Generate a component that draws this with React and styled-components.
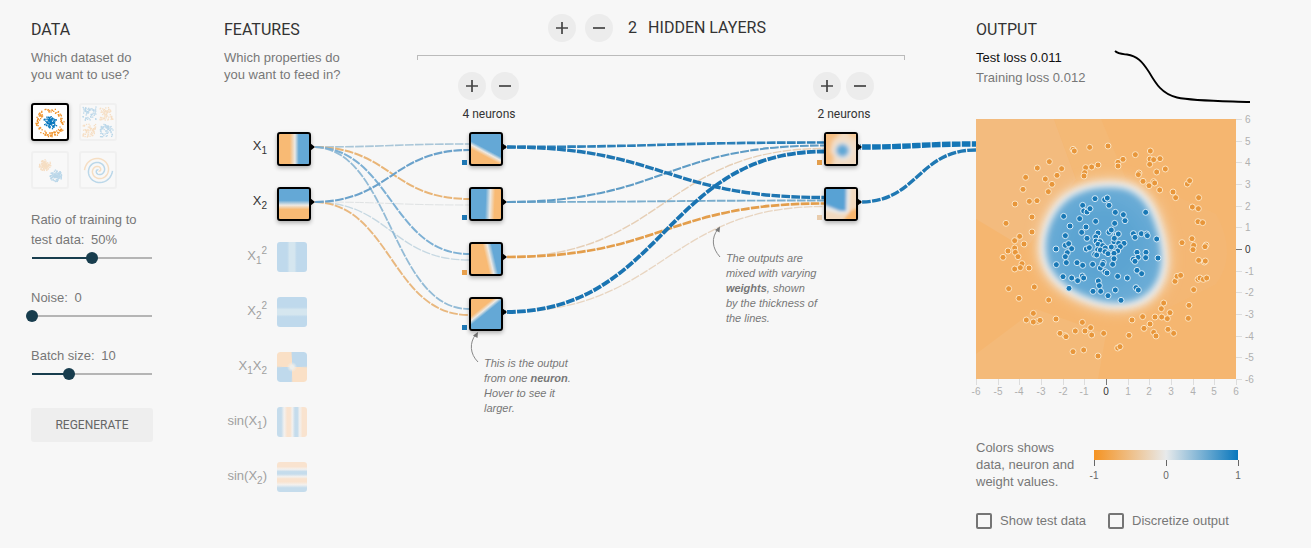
import React, { useLayoutEffect, useRef, useState } from "react";
import styled, { createGlobalStyle, css } from "styled-components";

const ORANGE = "#f8ba74";
const BLUE = "#64a8d6";
const MID = "#ece9e4";
const SANS = '"Liberation Sans", Arial, sans-serif';
const ROBOTO = 'Roboto, "Liberation Sans", sans-serif';

const GlobalStyle = createGlobalStyle`
  * { box-sizing: border-box; }
  body {
    margin: 0;
    background: #f7f7f7;
    color: #777;
    font-family: ${SANS};
    font-size: 13px;
  }
`;

const Page = styled.main`
  display: grid;
  grid-template-columns: 122px minmax(640px, 1fr) 304px;
  padding: 20px 31px 19px;
`;

const Heading = styled.h2`
  margin: 0;
  font: 400 16px/20px ${ROBOTO};
  color: #333;
  text-transform: uppercase;
  white-space: nowrap;
`;

const Intro = styled.p`
  margin: 9px 0 0;
  line-height: 17px;
  white-space: nowrap;
`;

/* ---------- data column ---------- */

const DataColumn = styled.section`
  display: flex;
  flex-direction: column;
`;

const DatasetGrid = styled.div`
  display: grid;
  grid-template-columns: 38px 38px;
  gap: 10px;
  margin: 20px 0 21px;
`;

const DatasetButton = styled.button`
  width: 38px;
  height: 38px;
  padding: 0;
  border: 2px solid ${(p) => (p.$selected ? "#000" : "#f0f0f0")};
  border-radius: 3px;
  background: ${(p) => (p.$selected ? "#fff" : "#f8f8f8")};
  box-shadow: ${(p) => (p.$selected ? "0 1px 4px rgba(0, 0, 0, 0.25)" : "none")};

  svg {
    display: block;
    opacity: ${(p) => (p.$selected ? 1 : 0.25)};
  }
`;

const SliderField = styled.label`
  display: flex;
  flex-direction: column;
  gap: 2px;
  margin-bottom: 24px;
  line-height: 20px;
`;

const SliderValue = styled.span`
  margin-left: 3px;
`;

const thumb = css`
  width: 12px;
  height: 12px;
  border: 0;
  border-radius: 50%;
  background: #183d4e;
`;

const Slider = styled.input`
  appearance: none;
  width: 132px;
  height: 12px;
  margin: 0 0 0 -5px;
  background: linear-gradient(
      to right,
      #183d4e ${(p) => p.$fill}%,
      #b5b5b5 ${(p) => p.$fill}%
    )
    6px 5px / 120px 2px no-repeat;

  &::-webkit-slider-thumb {
    appearance: none;
    ${thumb}
  }
  &::-moz-range-thumb {
    ${thumb}
  }
`;

const RegenerateButton = styled.button`
  height: 34px;
  margin-top: 4px;
  border: 0;
  border-radius: 3px;
  background: #eee;
  color: #666;
  font: 400 12px ${ROBOTO};
  text-transform: uppercase;
`;

/* ---------- network ---------- */

const NetworkSection = styled.section`
  position: relative;
  display: flex;
  margin-left: 71px;
`;

const LinkLayer = styled.svg`
  position: absolute;
  left: 0;
  top: -20px;
  width: 100%;
  height: 500px;
  pointer-events: none;
`;

const FeatureColumn = styled.div`
  width: 193px;
  position: relative;
`;

const FeatureList = styled.div`
  display: flex;
  flex-direction: column;
  gap: 21px;
  width: 87px;
  margin-top: 49px;
`;

const FeatureRow = styled.div`
  display: grid;
  grid-template-columns: 1fr 34px;
  column-gap: 10px;
  height: 34px;
`;

const FeatureLabel = styled.span`
  justify-self: end;
  line-height: 28px;
  white-space: nowrap;
  color: ${(p) => (p.$active ? "#333" : "#a0a0a0")};

  sub,
  sup {
    font-size: 10px;
    line-height: 0;
    vertical-align: baseline;
    position: relative;
  }
  sub { top: 4px; }
  sup { top: -6px; }
`;

const Node = styled.button`
  position: relative;
  width: ${(p) => (p.$active ? 34 : 30)}px;
  height: ${(p) => (p.$active ? 34 : 30)}px;
  padding: 0;
  border: ${(p) => (p.$active ? "2px solid #000" : "0")};
  border-radius: 3px;
  background: ${(p) => p.$map} padding-box;
  box-shadow: ${(p) => (p.$active ? "0 2px 4px rgba(0, 0, 0, 0.3)" : "none")};

  &::after {
    content: "";
    display: ${(p) => (p.$active ? "block" : "none")};
    position: absolute;
    left: 31px;
    top: 9px;
    border: solid transparent;
    border-width: 4px 0 4px 5px;
    border-left-color: #000;
  }

  svg { display: block; }
`;

const Bias = styled.i`
  position: absolute;
  left: -9px;
  top: 26px;
  width: 5px;
  height: 5px;
  background: ${(p) => p.$color};
`;

const HiddenColumn = styled.div`
  position: relative;
  flex: 1;
  margin: -6px 71px 0 0;
`;

const HiddenHeader = styled.div`
  display: flex;
  justify-content: center;
  align-items: center;
  gap: 9px;
  padding-right: 8px;
`;

const LayerCount = styled.span`
  margin: 0 2px 0 6px;
`;

const Bracket = styled.div`
  height: 5px;
  margin-top: 13px;
  border: 1px solid #bbb;
  border-bottom: 0;
`;

const RoundButton = styled.button`
  display: grid;
  place-items: center;
  width: 28px;
  height: 28px;
  padding: 0;
  border: 0;
  border-radius: 50%;
  background: #ececec;
`;

const Layers = styled.div`
  display: flex;
  justify-content: space-between;
  margin-top: 12px;
  padding: 0 30px 0 41px;
`;

const Layer = styled.div`
  width: 62px;
`;

const LayerControls = styled.div`
  display: flex;
  gap: 5px;
`;

const NeuronCount = styled.div`
  margin: 4px 0 8px;
  font: 400 12px/20px ${ROBOTO};
  color: #333;
  text-align: center;
  white-space: nowrap;
`;

const NeuronList = styled.div`
  display: flex;
  flex-direction: column;
  gap: 21px;
  margin-left: 11px;
`;

const Callout = styled.p`
  position: absolute;
  margin: 0;
  font-size: 11px;
  font-style: italic;
  line-height: 15px;
  white-space: nowrap;
  color: #777;
  ${(p) => (p.$weights ? "top: 231px; right: 159px;" : "top: 336px; left: 260px;")}
`;

/* ---------- output ---------- */

const OutputColumn = styled.section`
  display: flex;
  flex-direction: column;
`;

const LossRow = styled.div`
  display: grid;
  grid-template-columns: 139px 136px;
  height: 71px;
  margin-top: 8px;
  line-height: 20px;
`;

const Loss = styled.div`
  color: ${(p) => (p.$test ? "#111" : "#777")};
`;

const Chart = styled.svg`
  display: block;
  overflow: visible;
`;

const Legend = styled.div`
  display: grid;
  grid-template-columns: 118px 145px;
  height: 51px;
  margin-top: 35px;
  line-height: 17px;
`;

const LegendText = styled.p`
  margin: 0;
  white-space: nowrap;
`;

const Options = styled.div`
  display: flex;
  gap: 22px;
  margin-top: 23px;
`;

const Option = styled.label`
  display: flex;
  align-items: center;
  gap: 8px;
  line-height: 16px;
`;

const Checkbox = styled.input`
  appearance: none;
  width: 16px;
  height: 16px;
  margin: 0;
  border: 2px solid #757575;
  border-radius: 2px;

  &:checked { background: #757575; }
`;

/* ---------- drawings ---------- */

function Sign({ plus }) {
  return (
    <svg width="14" height="14" viewBox="0 0 14 14" stroke="#444" strokeWidth="1.7" aria-hidden="true">
      <path d={plus ? "M1 7H13M7 1V13" : "M1 7H13"} />
    </svg>
  );
}

function makeRandom(seed) {
  let s = seed;
  return () => {
    s = (s * 16807) % 2147483647;
    return s / 2147483647;
  };
}

function disc(rand, n, cx, cy, r0, r1) {
  return Array.from({ length: n }, () => {
    const a = rand() * Math.PI * 2;
    const r = r0 + rand() * (r1 - r0);
    return [cx + Math.cos(a) * r, cy + Math.sin(a) * r];
  });
}

function square(rand, n, x, y) {
  return Array.from({ length: n }, () => [x + rand() * 13, y + rand() * 13]);
}

function Specks({ points, color }) {
  return points.map(([x, y], i) => (
    <rect key={i} x={x - 0.6} y={y - 0.6} width="1.3" height="1.3" fill={color} />
  ));
}

function spiral(phase) {
  let d = "";
  for (let i = 0; i <= 60; i++) {
    const r = 0.5 + (i / 60) * 13.5;
    const a = phase + (i / 60) * 10.5;
    d += `${i ? "L" : "M"}${(17.5 + Math.cos(a) * r).toFixed(1)} ${(17.5 - Math.sin(a) * r).toFixed(1)}`;
  }
  return d;
}

const DATA_BLUE = "#0877bd";
const DATA_ORANGE = "#f0932b";

function DatasetPicture({ kind }) {
  const rand = makeRandom(kind.length * 7919);
  return (
    <svg width="34" height="34" viewBox="0 0 34 34" aria-hidden="true">
      {kind === "circle" && (
        <>
          <Specks points={disc(rand, 115, 17.5, 17.5, 10, 14.5)} color={DATA_ORANGE} />
          <Specks points={disc(rand, 95, 17.5, 17.5, 0, 7)} color={DATA_BLUE} />
        </>
      )}
      {kind === "exclusive or" && (
        <>
          <Specks points={square(rand, 65, 2, 2)} color={DATA_BLUE} />
          <Specks points={square(rand, 65, 19, 19)} color={DATA_BLUE} />
          <Specks points={square(rand, 65, 19, 2)} color={DATA_ORANGE} />
          <Specks points={square(rand, 65, 2, 19)} color={DATA_ORANGE} />
        </>
      )}
      {kind === "gaussian" && (
        <>
          <Specks points={disc(rand, 130, 12, 12, 0, 6)} color={DATA_ORANGE} />
          <Specks points={disc(rand, 130, 23, 23, 0, 6)} color={DATA_BLUE} />
        </>
      )}
      {kind === "spiral" && (
        <g fill="none" strokeWidth="1.5">
          <path d={spiral(-1.1)} stroke={DATA_ORANGE} />
          <path d={spiral(2.04)} stroke={DATA_BLUE} />
        </g>
      )}
    </svg>
  );
}

function BlobMap() {
  return (
    <svg width="30" height="30" viewBox="0 0 30 30" aria-hidden="true">
      <defs>
        <filter id="soft" x="-50%" y="-50%" width="200%" height="200%">
          <feGaussianBlur stdDeviation="2" />
        </filter>
      </defs>
      <rect width="30" height="30" fill="#f2dcc4" />
      <g filter="url(#soft)">
        <path d="M-4 -4H18L6 7L4 18L8 22L5 34H-4Z" fill="#f6bd80" />
        <path d="M20 -4H34V6L24 3Z" fill="#f6c894" />
        <circle cx="17" cy="17" r="9" fill="#ecebea" />
        <circle cx="16.500" cy="16.500" r="6.500" fill="#62a8d6" />
      </g>
    </svg>
  );
}

function CornerMap() {
  return (
    <svg width="30" height="30" viewBox="0 0 30 30" aria-hidden="true">
      <defs>
        <filter id="softer" x="-50%" y="-50%" width="200%" height="200%">
          <feGaussianBlur stdDeviation="1.6" />
        </filter>
      </defs>
      <rect width="30" height="30" fill="#f1d9bf" />
      <g filter="url(#softer)">
        <path d="M34 18L24 22L16 34H34Z" fill="#f8b66e" />
        <path d="M-6 -6H25L23 24L14 25L-6 20Z" fill="#e9e9e8" />
        <path d="M-6 -6H20.500L20 22L14 22L-6 14Z" fill="#58a2d4" />
      </g>
    </svg>
  );
}

const ramp = (angle, a, b, c, from, to) =>
  `linear-gradient(${angle}deg, ${from} ${a}%, ${MID} ${b}%, ${to} ${c}%)`;

const PALE_BLUE = "#bfd9ec";
const PALE_ORANGE = "#fae0c6";
const PALE_MID = "#f3f1ef";

const waves = (angle, b, o) =>
  `linear-gradient(${angle}deg, ${b} 14%, ${PALE_MID} 24%, ${o} 34%, ${o} 44%, ${PALE_MID} 51%, ${b} 60%, ${b} 68%, ${PALE_MID} 76%, ${o} 85%)`;

const FEATURES = [
  { name: "x1", label: <>X<sub>1</sub></>, active: true, map: ramp(90, 36, 53, 66, ORANGE, BLUE) },
  { name: "x2", label: <>X<sub>2</sub></>, active: true, map: ramp(180, 38, 54, 68, BLUE, ORANGE) },
  {
    name: "x1 squared",
    label: <>X<sub>1</sub><sup>2</sup></>,
    map: `linear-gradient(90deg, ${PALE_BLUE} 34%, #d5e6ef 42%, #d5e6ef 58%, ${PALE_BLUE} 66%)`,
  },
  {
    name: "x2 squared",
    label: <>X<sub>2</sub><sup>2</sup></>,
    map: `linear-gradient(180deg, ${PALE_BLUE} 34%, #d5e6ef 42%, #d5e6ef 58%, ${PALE_BLUE} 66%)`,
  },
  {
    name: "x1 times x2",
    label: <>X<sub>1</sub>X<sub>2</sub></>,
    map: `radial-gradient(circle, #eeeeea 8%, transparent 24%), conic-gradient(${PALE_BLUE} 24%, ${PALE_ORANGE} 26% 49%, ${PALE_BLUE} 51% 74%, ${PALE_ORANGE} 76% 99%, ${PALE_BLUE})`,
  },
  { name: "sine of x1", label: <>sin(X<sub>1</sub>)</>, map: waves(90, "#c5dcec", "#f9e3cf") },
  { name: "sine of x2", label: <>sin(X<sub>2</sub>)</>, map: waves(0, "#c5dcec", "#f9e3cf") },
];

const HIDDEN = [
  [
    { bias: "#1e77b4", map: ramp(28, 33, 42, 50, ORANGE, BLUE) },
    { bias: "#1e77b4", map: ramp(92, 48, 63, 78, BLUE, ORANGE) },
    { bias: "#e8a04d", map: ramp(77, 50, 62, 74, ORANGE, BLUE) },
    { bias: "#1e77b4", map: ramp(141, 32, 40, 48, ORANGE, BLUE) },
  ],
  [
    { bias: "#e39e4c", map: "#f2dcc4", picture: <BlobMap /> },
    { bias: "#e9ccac", map: "#f1d9bf", picture: <CornerMap /> },
  ],
];

/* weights[source][target] = [colour, thickness] */
const WEIGHTS = [
  [
    [["#a9c6d8", 1.6], ["#e9b577", 2], ["#7db0d4", 2], ["#93bbd6", 1.8]],
    [["#6ba2cb", 2.1], ["#dfe2e3", 1], ["#c6d8e2", 1.3], ["#e9b87f", 1.9]],
  ],
  [
    [["#2b7fb8", 2.7], ["#1f76b2", 3.4]],
    [["#5f9cc5", 2.1], ["#7aadcd", 1.9]],
    [["#e6cfb6", 1.4], ["#e39e4c", 2.7]],
    [["#1a74b2", 3.8], ["#e8d5c1", 1.3]],
  ],
  [[["#1476b6", 5.4]], [["#1f78b3", 3.4]]],
];

const nodeY = (i) => 147 + 55 * i;

function Links({ width }) {
  const columns = [
    { out: 89 },
    { in: 245, out: 281 },
    { in: width - 152, out: width - 116 },
    { in: width },
  ];
  const links = [];
  WEIGHTS.forEach((sources, k) =>
    sources.forEach((targets, s) =>
      targets.forEach(([color, size], t) => {
        const x0 = columns[k].out;
        const x1 = columns[k + 1].in;
        const mid = (x0 + x1) / 2;
        const y0 = nodeY(s);
        const y1 = nodeY(t) + ((s - (sources.length - 1) / 2) / sources.length) * 12;
        links.push({
          key: `${k}-${s}-${t}`,
          color,
          size,
          d: `M${x0} ${y0}C${mid} ${y0} ${mid} ${y1} ${x1} ${y1}`,
        });
      })
    )
  );
  links.sort((a, b) => a.size - b.size);
  const wx = width - 752;
  return (
    <LinkLayer aria-hidden="true">
      <g fill="none" strokeDasharray="8.7 1.3" strokeDashoffset="-2">
        {links.map((l) => (
          <path key={l.key} d={l.d} stroke={l.color} strokeWidth={l.size} />
        ))}
      </g>
      <g fill="none" stroke="#888">
        <path d="M254 362C246 354 245 343 252 334" />
        <path d={`M${496 + wx} 257C${488 + wx} 248 ${487 + wx} 238 ${494 + wx} 229`} />
      </g>
      <g fill="#777">
        <path d="M254 332L249 335.500L253.500 338Z" />
        <path d={`M${496 + wx} 226.500L${491 + wx} 230L${495.5 + wx} 232.500Z`} />
      </g>
    </LinkLayer>
  );
}

function Network() {
  const ref = useRef(null);
  const [width, setWidth] = useState(752);
  useLayoutEffect(() => {
    const update = () => setWidth(ref.current.clientWidth);
    update();
    window.addEventListener("resize", update);
    return () => window.removeEventListener("resize", update);
  }, []);

  return (
    <NetworkSection ref={ref}>
      <Links width={width} />
      <FeatureColumn>
        <Heading>Features</Heading>
        <Intro>Which properties do<br />you want to feed in?</Intro>
        <FeatureList>
          {FEATURES.map((f) => (
            <FeatureRow key={f.name}>
              <FeatureLabel $active={f.active}>{f.label}</FeatureLabel>
              <Node aria-label={f.name} $active={f.active} $map={f.map} />
            </FeatureRow>
          ))}
        </FeatureList>
      </FeatureColumn>
      <HiddenColumn>
        <HiddenHeader>
          <RoundButton aria-label="Add layer"><Sign plus /></RoundButton>
          <RoundButton aria-label="Remove layer"><Sign /></RoundButton>
          <Heading as={LayerCount}>2</Heading>
          <Heading>Hidden layers</Heading>
        </HiddenHeader>
        <Bracket />
        <Layers>
          {HIDDEN.map((neurons, i) => (
            <Layer key={i}>
              <LayerControls>
                <RoundButton aria-label="Add neuron"><Sign plus /></RoundButton>
                <RoundButton aria-label="Remove neuron"><Sign /></RoundButton>
              </LayerControls>
              <NeuronCount>{neurons.length} neurons</NeuronCount>
              <NeuronList>
                {neurons.map((n, j) => (
                  <Node key={j} aria-label={`Neuron ${j + 1}`} $active $map={n.map}>
                    {n.picture}
                    <Bias $color={n.bias} />
                  </Node>
                ))}
              </NeuronList>
            </Layer>
          ))}
        </Layers>
      </HiddenColumn>
      <Callout>
        This is the output<br />from one <b>neuron</b>.<br />Hover to see it<br />larger.
      </Callout>
      <Callout $weights>
        The outputs are<br />mixed with varying<br /><b>weights</b>, shown<br />by the thickness of<br />the lines.
      </Callout>
    </NetworkSection>
  );
}

/* sample positions, in thirds of a pixel of the plot */
const toPoints = (text) => text.split(" ").map((p) => p.split(",").map((n) => n / 3));

const ORANGE_POINTS = toPoints(
  "291,91 295,96 341,85 396,81 220,128 184,147 257,149 149,175 208,180 243,169 228,196 217,218 141,211 329,146 347,144 366,138 326,161 324,171 426,130 441,121 426,141 478,107 523,96 522,120 533,122 552,119 521,136 542,159 568,150 489,162 487,167 501,187 519,200 533,188 536,192 551,213 591,219 599,236 634,195 641,185 668,236 649,264 667,269 666,308 680,311 648,359 618,371 653,379 651,392 690,378 687,383 160,247 183,245 117,255 168,294 90,313 168,339 131,352 116,365 144,375 116,387 96,396 118,400 126,413 81,415 " +
  "138,434 133,446 116,450 159,447 98,509 175,504 129,538 218,543 172,583 151,603 186,607 192,604 172,609 240,600 319,610 298,636 327,636 344,626 347,648 252,643 267,650 270,653 383,643 291,698 323,693 366,711 459,649 468,603 500,593 425,687 432,683 522,615 504,628 533,640 540,651 537,594 557,594 574,599 582,581 556,569 563,552 576,631 593,643 639,559 637,598 653,512 597,487 603,472 614,469 666,481 672,477 682,481 692,477 668,424 685,429 688,426"
);

const BLUE_POINTS = toPoints(
  "357,239 386,242 394,237 399,259 320,259 323,276 333,279 342,269 263,292 311,299 359,307 418,280 442,287 447,305 416,313 509,280 282,321 330,324 317,340 268,350 366,342 399,340 406,333 420,349 427,345 472,344 477,355 496,344 512,345 514,350 542,360 333,358 359,354 360,366 372,368 268,379 278,374 287,389 240,390 274,401 268,413 331,390 340,386 366,376 365,392 380,380 388,387 356,406 373,393 387,398 396,404 406,384 414,368 415,358 428,373 444,373 433,383 425,396 414,403 414,419 483,400 510,400 486,415 472,421 509,416 546,417 362,408 " +
  "271,431 241,437 303,431 320,439 350,436 382,430 410,436 373,447 387,458 393,462 380,436 261,473 287,477 305,485 319,471 323,477 279,508 367,486 370,500 351,517 374,517 396,530 435,544 418,513 425,472 454,477 483,454 497,464 480,506 487,513 477,427"
);

const BLOB =
  "M66 129C66 110 75 88 92 76C108 66 124 64 140 65C160 66 172 78 179 95C185 110 190 128 189 146C187 166 176 180 160 185C146 189 134 188 122 185C104 180 88 171 78 160C70 151 66 141 66 129Z";

function OutputPlot() {
  const ticks = Array.from({ length: 13 }, (_, i) => i - 6);
  return (
    <Chart width="285" height="285" viewBox="0 0 285 285" role="img" aria-label="Network output">
      <defs>
        <clipPath id="plot"><rect width="260" height="260" /></clipPath>
        <filter id="glow" x="-30%" y="-30%" width="160%" height="160%">
          <feGaussianBlur stdDeviation="6" />
        </filter>
        <filter id="edge" x="-30%" y="-30%" width="160%" height="160%">
          <feGaussianBlur stdDeviation="3.5" />
        </filter>
        <radialGradient id="core">
          <stop offset="0.5" stopColor="#5ba4d2" />
          <stop offset="1" stopColor="#6bacd6" />
        </radialGradient>
      </defs>
      <g clipPath="url(#plot)">
        <rect width="260" height="260" fill="#f5b670" />
        <path d="M0 0H78L100 60L50 130L0 100Z" fill="#f3bb7e" />
        <path d="M78 0H125L150 60H100Z" fill="#f4b976" />
        <path d="M0 235L60 190L130 215L122 260H0Z" fill="#f4ba79" />
        <path d="M185 70L240 95Q262 135 240 165L190 190Z" fill="#f4b774" />
        <path d={BLOB} fill="#f3d2ac" stroke="#f3cda2" strokeWidth="14" filter="url(#glow)" />
        <path d={BLOB} fill="#eeeeee" stroke="#eeeeee" strokeWidth="5" filter="url(#edge)" />
        <path
          d={BLOB}
          fill="url(#core)"
          filter="url(#edge)"
          transform="translate(128 126) scale(0.94) translate(-128 -126)"
        />
        <g>
          {ORANGE_POINTS.map(([x, y], i) => (
            <circle key={i} cx={x} cy={y} r="3" fill="#e8963a" stroke="#fce3c0" />
          ))}
          {BLUE_POINTS.map(([x, y], i) => (
            <circle key={i} cx={x} cy={y} r="3" fill="#1878b6" stroke="#d5eaf7" />
          ))}
        </g>
      </g>
      <g fontFamily={SANS} fontSize="10">
        {ticks.map((t) => {
          const p = Math.round(((t + 6) * 260) / 12);
          const tone = t === 0 ? "#333" : "#b0b0b0";
          const line = t === 0 ? "#777" : "#ddd";
          return (
            <g key={t} fill={tone}>
              <path d={`M${p + 0.5} 260V266M260 ${260.5 - p}H266`} stroke={line} />
              <text x={p} y="276" textAnchor="middle">{t}</text>
              <text x="269" y={264 - p}>{t}</text>
            </g>
          );
        })}
      </g>
    </Chart>
  );
}

function ColorScale() {
  return (
    <Chart width="145" height="51" viewBox="0 0 145 51" role="img" aria-label="Color scale">
      <defs>
        <linearGradient id="scale">
          <stop offset="0" stopColor="#f59322" />
          <stop offset="0.5" stopColor="#e8eaeb" />
          <stop offset="1" stopColor="#0877bd" />
        </linearGradient>
      </defs>
      <rect y="11" width="144" height="10" fill="url(#scale)" />
      <path d="M0.500 21V27M72.500 21V27M144.500 21V27" stroke="#666" />
      <g fontFamily={SANS} fontSize="10" fill="#666" textAnchor="middle">
        <text x="0" y="40">-1</text>
        <text x="72" y="40">0</text>
        <text x="144" y="40">1</text>
      </g>
    </Chart>
  );
}

function SliderControl({ children, value, min, max, shown }) {
  const [current, setCurrent] = useState(value);
  return (
    <SliderField>
      <span>
        {children} <SliderValue>{shown(current)}</SliderValue>
      </span>
      <Slider
        type="range"
        min={min}
        max={max}
        value={current}
        $fill={((current - min) / (max - min)) * 100}
        onChange={(e) => setCurrent(Number(e.target.value))}
      />
    </SliderField>
  );
}

export default function App() {
  const [dataset, setDataset] = useState("circle");
  return (
    <>
      <GlobalStyle />
      <Page>
        <DataColumn>
          <Heading>Data</Heading>
          <Intro>Which dataset do<br />you want to use?</Intro>
          <DatasetGrid>
            {["circle", "exclusive or", "gaussian", "spiral"].map((kind) => (
              <DatasetButton
                key={kind}
                aria-label={kind}
                $selected={dataset === kind}
                onClick={() => setDataset(kind)}
              >
                <DatasetPicture kind={kind} />
              </DatasetButton>
            ))}
          </DatasetGrid>
          <SliderControl value={50} min={10} max={90} shown={(v) => `${v}%`}>
            Ratio of training to<br />test data:
          </SliderControl>
          <SliderControl value={0} min={0} max={50} shown={(v) => v}>Noise:</SliderControl>
          <SliderControl value={10} min={1} max={30} shown={(v) => v}>Batch size:</SliderControl>
          <RegenerateButton>Regenerate</RegenerateButton>
        </DataColumn>

        <Network />

        <OutputColumn>
          <Heading>Output</Heading>
          <LossRow>
            <div>
              <Loss $test>Test loss 0.011</Loss>
              <Loss>Training loss 0.012</Loss>
            </div>
            <Chart width="136" height="58" viewBox="0 0 136 58" role="img" aria-label="Loss over time">
              <path
                d="M0 3C3 6 8 6 12 6.500C22 8 27 13 34 24C41 36 47 46 62 49.500C78 53 105 53 135 54"
                fill="none"
                stroke="#000"
                strokeWidth="1.8"
              />
            </Chart>
          </LossRow>
          <OutputPlot />
          <Legend>
            <LegendText>Colors shows<br />data, neuron and<br />weight values.</LegendText>
            <ColorScale />
          </Legend>
          <Options>
            <Option><Checkbox type="checkbox" />Show test data</Option>
            <Option><Checkbox type="checkbox" />Discretize output</Option>
          </Options>
        </OutputColumn>
      </Page>
    </>
  );
}
